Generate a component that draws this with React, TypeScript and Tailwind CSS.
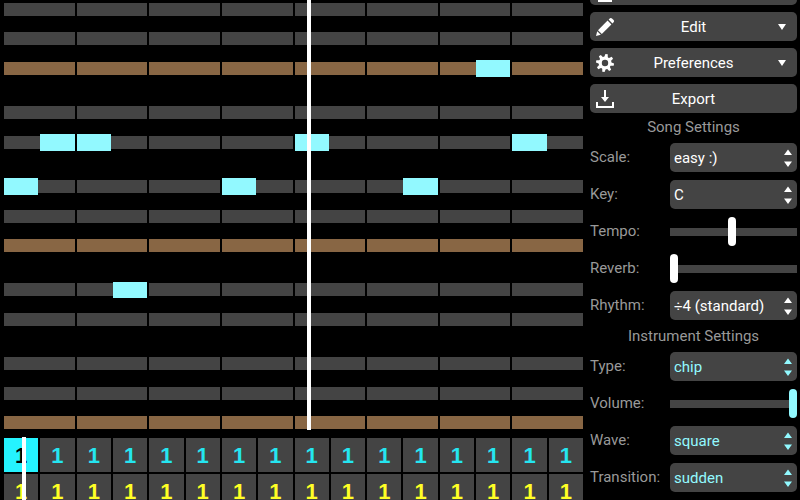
import type { ReactNode } from "react";

type Pitch = "root" | "scale" | "off";

interface PitchRow {
  kind: Pitch;
  notes?: number[];
}

// top to bottom, one entry per semitone; notes are half-beat columns
const pitchRows: PitchRow[] = [
  { kind: "scale" },
  { kind: "off" },
  { kind: "scale" },
  { kind: "off" },
  { kind: "root", notes: [13] },
  { kind: "off" },
  { kind: "off" },
  { kind: "scale" },
  { kind: "off" },
  { kind: "scale", notes: [1, 2, 8, 14] },
  { kind: "off" },
  { kind: "off" },
  { kind: "scale", notes: [0, 6, 11] },
  { kind: "off" },
  { kind: "scale" },
  { kind: "off" },
  { kind: "root" },
  { kind: "off" },
  { kind: "off" },
  { kind: "scale", notes: [3] },
  { kind: "off" },
  { kind: "scale" },
  { kind: "off" },
  { kind: "off" },
  { kind: "scale" },
  { kind: "off" },
  { kind: "scale" },
  { kind: "off" },
  { kind: "root" },
];

const beats = Array.from({ length: 8 }, (_, i) => i);
const columns = Array.from({ length: 16 }, (_, i) => i);

const PatternEditor = () => (
  <div className="relative flex h-[430px] flex-col pt-[2px]">
    {pitchRows.map((row, index) => (
      <div key={index} className="relative min-h-0 flex-1">
        {row.kind !== "off" && (
          <div className="grid h-full grid-cols-8 items-center gap-0.5">
            {beats.map((beat) => (
              <div
                key={beat}
                className={`h-[13px] ${row.kind === "root" ? "bg-[#886644]" : "bg-[#444444]"}`}
              />
            ))}
          </div>
        )}
        {row.notes && (
          <div className="absolute inset-x-0 -inset-y-px grid grid-cols-16 gap-0.5">
            {columns.map((column) => (
              <div key={column} className={row.notes?.includes(column) ? "bg-[#92f9ff]" : ""} />
            ))}
          </div>
        )}
      </div>
    ))}
    <div className="absolute inset-y-0 left-[52.4%] w-1 bg-white" />
  </div>
);

const TrackEditor = () => (
  <div className="relative mt-2 flex flex-col gap-0.5 font-['Liberation_Sans',sans-serif] text-[22px] font-bold">
    <div className="grid grid-cols-16 gap-0.5">
      {columns.map((column) => (
        <button
          key={column}
          className={`h-[34px] ${column === 0 ? "bg-[#25f3ff] text-black" : "bg-[#444444] text-[#25e5f0]"}`}
        >
          1
        </button>
      ))}
    </div>
    <div className="grid grid-cols-16 gap-0.5">
      {columns.map((column) => (
        <button key={column} className="h-[34px] bg-[#444444] text-[#ffff25]">
          1
        </button>
      ))}
    </div>
    <div className="absolute -top-px bottom-0 left-[3.1%] w-1 bg-white" />
  </div>
);

interface MenuButtonProps {
  label: string;
  icon: ReactNode;
  menu?: boolean;
}

const MenuButton = ({ label, icon, menu = false }: MenuButtonProps) => (
  <button className="grid h-[29px] w-full grid-cols-[20px_1fr_20px] items-center rounded-[5px] bg-[#444444] px-[5px] text-white">
    <svg viewBox="0 0 20 20" className="h-5 w-5 overflow-visible" fill="currentColor" aria-hidden="true">
      {icon}
    </svg>
    <span>{label}</span>
    {menu && (
      <svg viewBox="0 0 8 6" className="ml-1.5 h-1.5 w-2" fill="currentColor" aria-hidden="true">
        <path d="M0 0H8L4 6Z" />
      </svg>
    )}
  </button>
);

const gearTeeth = [0, 45, 90, 135, 180, 225, 270, 315];

const icons = {
  file: <path d="M3 2H14L17 5V21H3Z" />,
  edit: (
    <>
      <path d="M1 19L2.2 14.2L5.8 17.8Z" />
      <path d="M3 13.2L12.6 3.6L16.4 7.4L6.8 17Z" />
      <path d="M13.6 2.6L15 1.2Q16 .5 17 1.4L18.6 3Q19.5 4 18.8 5L17.4 6.4Z" />
    </>
  ),
  preferences: (
    <>
      <circle cx="10" cy="10" r="4.8" fill="none" stroke="currentColor" strokeWidth="3.2" />
      {gearTeeth.map((angle) => (
        <path key={angle} d="M8.2 4.4L8.8 1H11.2L11.8 4.4Z" transform={`rotate(${angle + 10} 10 10)`} />
      ))}
    </>
  ),
  export: (
    <>
      <path d="M1 13H3V17H17V13H19V19H1Z" />
      <path d="M9 1H11V8H14L10 13L6 8H9Z" />
    </>
  ),
};

interface SelectRowProps {
  id: string;
  label: string;
  value: string;
  tinted?: boolean;
}

const SelectRow = ({ id, label, value, tinted = false }: SelectRowProps) => (
  <div className="flex h-[29px] items-center justify-between">
    <label htmlFor={id} className="pb-0.5 text-[#999999]">
      {label}
    </label>
    <div className={`relative h-full w-[127px] ${tinted ? "text-[#92f9ff]" : "text-white"}`}>
      <select id={id} className="h-full w-full appearance-none rounded-[5px] bg-[#444444] pl-1 pr-4">
        <option>{value}</option>
      </select>
      <svg
        viewBox="0 0 8 18"
        className="pointer-events-none absolute right-[5px] top-1.5 h-[18px] w-2"
        fill="currentColor"
        aria-hidden="true"
      >
        <path d="M0 6L4 0.5L8 6ZM0 12.5H8L4 18Z" />
      </svg>
    </div>
  </div>
);

interface SliderRowProps {
  id: string;
  label: string;
  value: number;
  tinted?: boolean;
}

const SliderRow = ({ id, label, value, tinted = false }: SliderRowProps) => (
  <div className="flex h-[29px] items-center justify-between">
    <label htmlFor={id} className="pb-0.5 text-[#999999]">
      {label}
    </label>
    <input
      id={id}
      type="range"
      min={0}
      max={100}
      defaultValue={value}
      className={`h-full w-[127px] appearance-none bg-transparent [&::-webkit-slider-runnable-track]:h-2 [&::-webkit-slider-runnable-track]:bg-[#444444] [&::-webkit-slider-thumb]:-mt-[11px] [&::-webkit-slider-thumb]:h-[29px] [&::-webkit-slider-thumb]:w-2 [&::-webkit-slider-thumb]:appearance-none [&::-webkit-slider-thumb]:rounded-[4px] ${
        tinted ? "[&::-webkit-slider-thumb]:bg-[#92f9ff]" : "[&::-webkit-slider-thumb]:bg-white"
      }`}
    />
  </div>
);

const SettingsPanel = () => (
  <aside className="ml-[7px] mr-[3px] w-[207px] shrink-0 text-[15px] leading-5">
    {/* Menus, the first one is scrolled off the top */}
    <div className="-mt-6 flex h-[137px] flex-col justify-between">
      <MenuButton label="File" icon={icons.file} menu />
      <MenuButton label="Edit" icon={icons.edit} menu />
      <MenuButton label="Preferences" icon={icons.preferences} menu />
      <MenuButton label="Export" icon={icons.export} />
    </div>

    <h2 className="mt-1 mb-1.5 text-center text-[#999999]">Song Settings</h2>
    <div className="flex flex-col gap-2">
      <SelectRow id="scale" label="Scale:" value="easy :)" />
      <SelectRow id="key" label="Key:" value="C" />
      <SliderRow id="tempo" label="Tempo:" value={49} />
      <SliderRow id="reverb" label="Reverb:" value={0} />
      <SelectRow id="rhythm" label="Rhythm:" value="÷4 (standard)" />
    </div>

    <h2 className="my-1.5 text-center text-[#999999]">Instrument Settings</h2>
    <div className="flex flex-col gap-2">
      <SelectRow id="type" label="Type:" value="chip" tinted />
      <SliderRow id="volume" label="Volume:" value={100} tinted />
      <SelectRow id="wave" label="Wave:" value="square" tinted />
      <SelectRow id="transition" label="Transition:" value="sudden" tinted />
    </div>
  </aside>
);

const App = () => {
  return (
    <div className="flex h-screen overflow-hidden bg-black font-[Roboto,sans-serif]">
      <main className="min-w-0 flex-1 pl-1">
        <PatternEditor />
        <TrackEditor />
      </main>
      <SettingsPanel />
    </div>
  );
};

export default App;
